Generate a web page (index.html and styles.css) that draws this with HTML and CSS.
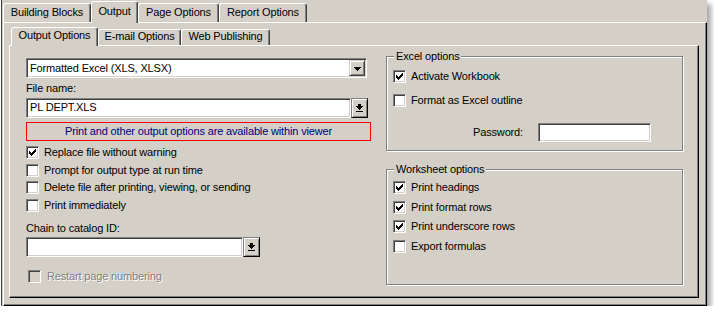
FILE: index.html
```html
<!DOCTYPE html>
<html>
<head>
<meta charset="utf-8">
<title>Output</title>
<link rel="stylesheet" href="styles.css">
</head>
<body>
<div class="shot">
  <div class="tabrow outer-row">
    <div class="tab w-bb">Building Blocks</div>
    <div class="tab sel w-out">Output</div>
    <div class="tab w-po">Page Options</div>
    <div class="tab w-ro">Report Options</div>
  </div>
  <div class="panel outer-panel">
    <div class="tabrow inner-row">
      <div class="tab sel w-oo">Output Options</div>
      <div class="tab w-em">E-mail Options</div>
      <div class="tab w-wp">Web Publishing</div>
    </div>
    <div class="panel inner-panel">
      <div class="left">
        <div class="field combo">
          <span class="combo-text">Formatted Excel (XLS, XLSX)</span>
          <span class="btn drop"><svg width="7" height="4" viewBox="0 0 7 4" shape-rendering="crispEdges"><path d="M0 0h7v1H0z M1 1h5v1H1z M2 2h3v1H2z M3 3h1v1H3z" fill="#000"/></svg></span>
        </div>
        <div class="label">File name:</div>
        <div class="field-row">
          <div class="field file-input">PL DEPT.XLS</div>
          <div class="btn browse"><svg width="7" height="8" viewBox="0 0 7 8" shape-rendering="crispEdges"><path d="M2 0h3v2H2z M0 2h7v1H0z M1 3h5v1H1z M2 4h3v1H2z M3 5h1v1H3z M0 7h7v1H0z" fill="#000"/></svg></div>
        </div>
        <div class="notice">Print and other output options are available within viewer</div>
        <div class="checks">
          <div class="chk"><span class="box"><svg width="7" height="7" viewBox="0 0 7 7" shape-rendering="crispEdges"><path d="M0 2h1v3H0z M1 3h1v3H1z M2 4h1v3H2z M3 3h1v3H3z M4 2h1v3H4z M5 1h1v3H5z M6 0h1v3H6z" fill="#000"/></svg></span><span>Replace file without warning</span></div>
          <div class="chk"><span class="box"></span><span>Prompt for output type at run time</span></div>
          <div class="chk"><span class="box"></span><span>Delete file after printing, viewing, or sending</span></div>
          <div class="chk"><span class="box"></span><span>Print immediately</span></div>
        </div>
        <div class="label chain-label">Chain to catalog ID:</div>
        <div class="field-row">
          <div class="field catalog-input"></div>
          <div class="btn browse"><svg width="7" height="8" viewBox="0 0 7 8" shape-rendering="crispEdges"><path d="M2 0h3v2H2z M0 2h7v1H0z M1 3h5v1H1z M2 4h3v1H2z M3 5h1v1H3z M0 7h7v1H0z" fill="#000"/></svg></div>
        </div>
        <div class="chk disabled"><span class="box off"></span><span>Restart page numbering</span></div>
      </div>
      <div class="right">
        <fieldset class="group excel">
          <legend>Excel options</legend>
          <div class="chk tall"><span class="box"><svg width="7" height="7" viewBox="0 0 7 7" shape-rendering="crispEdges"><path d="M0 2h1v3H0z M1 3h1v3H1z M2 4h1v3H2z M3 3h1v3H3z M4 2h1v3H4z M5 1h1v3H5z M6 0h1v3H6z" fill="#000"/></svg></span><span>Activate Workbook</span></div>
          <div class="chk tall"><span class="box"></span><span>Format as Excel outline</span></div>
          <div class="pw-row">
            <span class="pw-label">Password:</span>
            <div class="field pw-input"></div>
          </div>
        </fieldset>
        <fieldset class="group worksheet">
          <legend>Worksheet options</legend>
          <div class="chk mid"><span class="box"><svg width="7" height="7" viewBox="0 0 7 7" shape-rendering="crispEdges"><path d="M0 2h1v3H0z M1 3h1v3H1z M2 4h1v3H2z M3 3h1v3H3z M4 2h1v3H4z M5 1h1v3H5z M6 0h1v3H6z" fill="#000"/></svg></span><span>Print headings</span></div>
          <div class="chk mid"><span class="box"><svg width="7" height="7" viewBox="0 0 7 7" shape-rendering="crispEdges"><path d="M0 2h1v3H0z M1 3h1v3H1z M2 4h1v3H2z M3 3h1v3H3z M4 2h1v3H4z M5 1h1v3H5z M6 0h1v3H6z" fill="#000"/></svg></span><span>Print format rows</span></div>
          <div class="chk mid"><span class="box"><svg width="7" height="7" viewBox="0 0 7 7" shape-rendering="crispEdges"><path d="M0 2h1v3H0z M1 3h1v3H1z M2 4h1v3H2z M3 3h1v3H3z M4 2h1v3H4z M5 1h1v3H5z M6 0h1v3H6z" fill="#000"/></svg></span><span>Print underscore rows</span></div>
          <div class="chk mid"><span class="box"></span><span>Export formulas</span></div>
        </fieldset>
      </div>
    </div>
  </div>
</div>
</body>
</html>
```

FILE: styles.css
```css
* { box-sizing: border-box; }

html, body {
  margin: 0;
  padding: 0;
  background: #ffffff;
}

body {
  font-family: "Liberation Sans", Arial, sans-serif;
  font-size: 11px;
  line-height: 13px;
  letter-spacing: -0.15px;
  color: #000;
}

.shot {
  margin-left: 1px;
  width: 706px;
  height: 306px;
  background: #d4d0c8;
  border-left: 1px solid #404040;
  box-shadow: 4px 4px 5px rgba(0, 0, 0, 0.35);
  display: flex;
  flex-direction: column;
}

/* tabs */
.tabrow {
  display: flex;
  align-items: flex-end;
  flex: none;
}

.outer-row {
  height: 22px;
  padding-left: 1px;
}

.inner-row {
  height: 22px;
  padding-left: 7px;
}

.tab {
  background: #d4d0c8;
  border-top: 1px solid #fff;
  border-left: 1px solid #fff;
  border-right: 1px solid #404040;
  box-shadow: inset -1px 0 #808080;
  border-radius: 3px 3px 0 0;
  text-align: center;
  white-space: nowrap;
}

.tab.sel {
  position: relative;
  z-index: 1;
  margin-bottom: -1px;
}

.outer-row .tab { height: 19px; padding-top: 2px; }
.outer-row .tab.sel { height: 22px; padding-top: 3px; }
.inner-row .tab { height: 16px; padding-top: 0; }
.inner-row .tab.sel { height: 19px; padding-top: 1px; }

.w-bb { width: 88px; }
.w-out { width: 47px; }
.w-po { width: 81px; }
.w-ro { width: 88px; }
.w-oo { width: 87px; }
.w-em { width: 83px; }
.w-wp { width: 89px; }

/* panels */
.panel {
  border: 1px solid;
  border-color: #fff #000 #000 #fff;
  box-shadow: inset -1px -1px #808080;
}

.outer-panel {
  margin-left: 1px;
  width: 704px;
  height: 284px;
}

.inner-panel {
  margin-left: 5px;
  width: 690px;
  height: 253px;
  display: flex;
  gap: 15px;
  padding: 4px 0 0 16px;
}

/* left column */
.left {
  width: 345px;
  padding-top: 8px;
  display: flex;
  flex-direction: column;
}

.field {
  background: #fff;
  border: 1px solid;
  border-color: #808080 #fff #fff #808080;
  box-shadow: inset 1px 1px #404040, inset -1px -1px #d4d0c8;
}

.combo {
  width: 341px;
  height: 20px;
  display: flex;
  align-items: center;
  justify-content: space-between;
  padding: 0 1px 0 3px;
}

.btn {
  background: #d4d0c8;
  border: 1px solid;
  border-color: #d4d0c8 #404040 #404040 #d4d0c8;
  box-shadow: inset 1px 1px #fff, inset -1px -1px #808080;
  display: flex;
  align-items: center;
  justify-content: center;
  flex: none;
}

.drop {
  width: 16px;
  height: 16px;
}

.drop svg { margin-top: 1px; }

.label {
  margin-top: 4px;
}

.field-row {
  margin-top: 3px;
  display: flex;
}

.file-input {
  width: 325px;
  height: 20px;
  padding: 2px 0 0 3px;
}

.catalog-input {
  width: 217px;
  height: 20px;
}

.browse {
  width: 17px;
  height: 20px;
  border-color: #808080 #000 #000 #808080;
}

.notice {
  margin-top: 4px;
  height: 19px;
  border: 1px solid #ff0000;
  color: #000080;
  text-align: center;
  line-height: 16px;
}

.checks {
  margin-top: 3px;
  display: flex;
  flex-direction: column;
}

.chk {
  display: flex;
  align-items: center;
  gap: 5px;
  height: 17.5px;
  white-space: nowrap;
}

.chk.tall { height: 24px; }
.chk.mid { height: 19.5px; }

.box {
  width: 13px;
  height: 13px;
  flex: none;
  background: #fff;
  border: 1px solid;
  border-color: #808080 #fff #fff #808080;
  box-shadow: inset 1px 1px #404040, inset -1px -1px #d4d0c8;
  display: flex;
  align-items: center;
  justify-content: center;
}

.box.off { background: #d4d0c8; }

.chain-label { margin-top: 8px; }
.chain-label + .field-row { margin-top: 2px; }

.disabled {
  margin-top: 11px;
  color: #808080;
  text-shadow: 1px 1px 0 #fff;
}

.disabled .box { margin-left: 2px; }
.disabled .box + span { margin-left: 1px; }

/* right column */
.right {
  width: 297px;
  display: flex;
  flex-direction: column;
}

.group {
  margin: 0;
  min-width: 0;
  border: 1px solid #808080;
  box-shadow: inset 1px 1px #fff, 1px 1px #fff;
  padding: 1px 6px 0 6px;
}

.group legend {
  margin-left: 1px;
  padding: 0 2px;
  background: #d4d0c8;
  line-height: 13px;
}

.excel {
  padding-bottom: 8px;
}

.worksheet {
  margin-top: 12px;
  padding-top: 2px;
  padding-bottom: 28px;
}

.pw-row {
  margin-top: 11px;
  display: flex;
  align-items: center;
}

.pw-label {
  width: 130px;
  margin-right: 15px;
  text-align: right;
}

.pw-input {
  width: 113px;
  height: 19px;
}
```
